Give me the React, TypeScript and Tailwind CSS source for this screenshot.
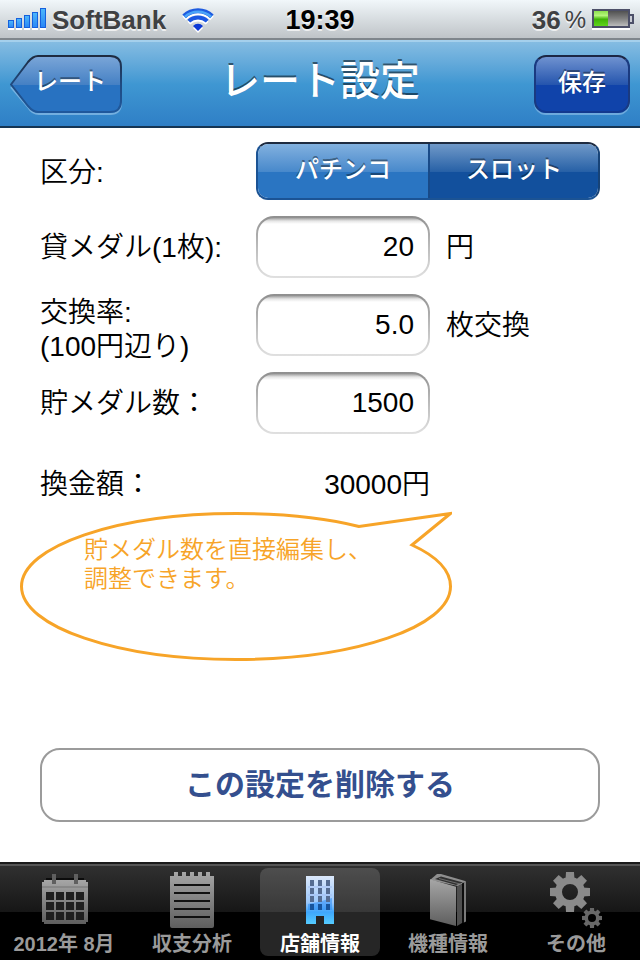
import { useState, type ReactNode } from "react";
import clsx from "clsx";

const FONT = "font-['Liberation_Sans','Noto_Sans_CJK_JP',sans-serif]";

function StatusBar() {
  return (
    <div className="grid h-10 grid-cols-[1fr_auto_1fr] items-center border-b-2 border-[#7f868c] bg-linear-to-b from-[#f1f7fa] to-[#bfc4c8] px-2 [text-shadow:0_2px_0_#ffffffb0]">
      <div className="flex items-center">
        <svg width="38" height="22" viewBox="0 0 38 22">
          <defs>
            <linearGradient id="signal" x1="0" y1="0" x2="0" y2="1">
              <stop offset="0" stopColor="#4db8fb" />
              <stop offset="1" stopColor="#2a86f5" />
            </linearGradient>
          </defs>
          <path d="M0 21h6M8 21h6M16 21h6M24 21h6M32 21h6" stroke="#fff" strokeWidth="2" />
          {[7, 9, 12, 15, 19].map((h, i) => (
            <rect
              key={h}
              x={i * 8 + 0.5}
              y={19.5 - h}
              width="5"
              height={h}
              fill="url(#signal)"
              stroke="#1660dd"
            />
          ))}
        </svg>
        <span className="ml-1.5 pt-0.5 text-[26px] leading-8 font-bold text-[#404143]">SoftBank</span>
        <svg className="ml-4" width="34" height="28" viewBox="0 0 34 28">
          <g fill="none" stroke="#fff" strokeWidth="5" transform="translate(0 2)">
            <path d="M2.100 11.400A20 20 0 0 1 29.900 11.400" />
            <path d="M6.800 16.100A13.500 13.500 0 0 1 25.200 16.100" strokeWidth="4" />
            <path d="M16 26L11 20.900A7 7 0 0 1 21 20.900Z" fill="#fff" stroke="none" />
          </g>
          <path d="M2.100 11.400A20 20 0 0 1 29.900 11.400" fill="none" stroke="#1d5be0" strokeWidth="5" />
          <path d="M2.800 12A19.400 19.400 0 0 1 29.200 12" fill="none" stroke="#4aa4f8" strokeWidth="2.500" />
          <path d="M6.800 16.100A13.500 13.500 0 0 1 25.200 16.100" fill="none" stroke="#1b57e2" strokeWidth="4" />
          <path d="M16 26L11 20.900A7 7 0 0 1 21 20.900Z" fill="#0c39d6" />
        </svg>
      </div>
      <span className="pt-0.5 text-[27px] leading-8 font-bold text-black">19:39</span>
      <div className="flex items-center justify-end text-[#404143]">
        <span className="pt-0.5 text-[26px] leading-8 font-bold">36</span>
        <span className="ml-1 pt-0.5 text-2xl leading-8">%</span>
        <svg className="ml-1.5 -mr-0.5" width="42" height="22" viewBox="0 0 42 22">
          <defs>
            <linearGradient id="charge" x1="0" y1="0" x2="0" y2="1">
              <stop offset="0" stopColor="#8be04d" />
              <stop offset=".3" stopColor="#b4f67a" />
              <stop offset=".55" stopColor="#3fb405" />
              <stop offset="1" stopColor="#5fd41c" />
            </linearGradient>
            <linearGradient id="empty" x1="0" y1="0" x2="0" y2="1">
              <stop offset="0" stopColor="#4b4b4b" />
              <stop offset=".5" stopColor="#808080" />
              <stop offset="1" stopColor="#c4c4c4" />
            </linearGradient>
          </defs>
          <path d="M0 21h38" stroke="#fff" strokeWidth="2" />
          <rect x="1" y="2" width="36" height="17" fill="url(#empty)" stroke="#4c4f68" strokeWidth="2" />
          <rect x="2" y="3" width="14" height="15" fill="url(#charge)" />
          <path d="M38 7h3v8h-3" fill="#c9ccd4" stroke="#4c4f68" strokeWidth="2" />
        </svg>
      </div>
    </div>
  );
}

function BackButton({ children }: { children: ReactNode }) {
  return (
    <button
      type="button"
      className="relative h-[58px] w-28 pb-1 pl-2 text-2xl font-medium text-white [text-shadow:0_-2px_0_#00000066]"
    >
      <svg className="absolute inset-0" width="112" height="60" viewBox="0 0 112 60">
        <defs>
          <linearGradient id="back" x1="0" y1="0" x2="0" y2="1">
            <stop offset="0" stopColor="#7ba6d8" />
            <stop offset=".52" stopColor="#4480c4" />
            <stop offset=".52" stopColor="#2872c1" />
            <stop offset="1" stopColor="#2872c1" />
          </linearGradient>
          <linearGradient id="backEdge" x1="0" y1="0" x2="0" y2="1">
            <stop offset="0" stopColor="#1e2b40" />
            <stop offset=".5" stopColor="#1f4a80" />
            <stop offset="1" stopColor="#1f589c" />
          </linearGradient>
        </defs>
        <path
          d="M1 32L18 52Q22 59 29 59H100Q111 59 111 48"
          fill="none"
          stroke="#8fc0e8"
          strokeWidth="2"
          opacity=".7"
        />
        <path
          d="M1 29.500L18 7Q23 1 28 1H100Q111 1 111 12V46Q111 57 100 57H28Q23 57 18 51Z"
          fill="url(#back)"
          stroke="url(#backEdge)"
          strokeWidth="2"
        />
      </svg>
      <span className="relative">{children}</span>
    </button>
  );
}

function NavBar() {
  return (
    <header className="grid h-22 grid-cols-[1fr_auto_1fr] items-center border-t-2 border-b-2 border-t-[#a5d0ec] border-b-[#153553] bg-linear-to-b from-[#84bce2] via-[#3f97d2] to-[#2f7fc6] px-2.5">
      <BackButton>レート</BackButton>
      <h1 className="pb-1.5 text-[40px] leading-12 font-medium text-white [text-shadow:0_-2px_0_#00000080]">
        レート設定
      </h1>
      <button
        type="button"
        className="h-[58px] w-24 justify-self-end rounded-xl border-2 border-t-[#1c2745] border-r-[#1a3a80] border-b-[#12398f] border-l-[#1a3a80] bg-[linear-gradient(#6f92d0,#2454ad_52%,#1043aa_52%,#1043aa)] pb-0.5 text-2xl font-medium text-white shadow-[0_2px_0_#8fc0e8a0] [text-shadow:0_-2px_0_#00000066]"
      >
        保存
      </button>
    </header>
  );
}

function Segments({ value, onChange }: { value: string; onChange: (v: string) => void }) {
  return (
    <div className="grid h-[58px] grid-cols-2 overflow-hidden rounded-xl border-2 border-t-[#1e2b40] border-r-[#174377] border-b-[#1b5394] border-l-[#1b5394]">
      {["パチンコ", "スロット"].map((name, i) => (
        <button
          key={name}
          type="button"
          aria-pressed={value === name}
          onClick={() => onChange(name)}
          className={clsx(
            "pb-0.5 text-2xl font-medium text-white [text-shadow:0_-2px_0_#00000066]",
            i > 0 && "border-l-2 border-[#184a88]",
            value === name
              ? "bg-[linear-gradient(#7099c8,#2660a6_52%,#12509d_52%,#12509d)]"
              : "bg-[linear-gradient(#82b1df,#4788cb_52%,#2a75c2_52%,#2a75c2)]",
          )}
        >
          {name}
        </button>
      ))}
    </div>
  );
}

function Field({
  id,
  label,
  value,
  unit,
  onChange,
}: {
  id: string;
  label: ReactNode;
  value: string;
  unit?: string;
  onChange: (v: string) => void;
}) {
  return (
    <div className="flex h-[62px] items-center">
      <label htmlFor={id} className="w-54 shrink-0 pt-0.5">
        {label}
      </label>
      <input
        id={id}
        inputMode="decimal"
        value={value}
        onChange={(e) => onChange(e.target.value)}
        className="h-[62px] w-[174px] rounded-[18px] border-2 border-transparent pr-3.5 text-right outline-none [background:linear-gradient(#a0a0a0,#e6e6e6_3px,#fff_6px)_padding-box,linear-gradient(#8f8f8f,#b4b4b4_40%,#e0e0e0)_border-box]"
      />
      {unit && <span className="ml-4 pt-0.5">{unit}</span>}
    </div>
  );
}

function Hint({ children }: { children: ReactNode }) {
  return (
    <div className="relative -ml-5 h-[150px] w-[432px] pt-6 pl-16 text-2xl leading-[29px] text-[#f7a428]">
      <svg className="absolute inset-0" width="432" height="150" viewBox="0 0 432 150">
        <path
          d="M339 15.500C306 7 262 2.500 216 2.500C98 2.500 1.500 35 1.500 75.500C1.500 116 98 148.500 216 148.500C334 148.500 430.500 116 430.500 75.500C430.500 59 416 45 392 34L430.500 2.500Z"
          fill="none"
          stroke="#f7a428"
          strokeWidth="3"
        />
      </svg>
      <p className="relative">{children}</p>
    </div>
  );
}

function CalendarIcon() {
  return (
    <>
      <path d="M12 8h38v2H12Z" fill="#0c0c0c" />
      <path d="M10 10h42v2h2v40h-2v2H10v-2H8V12h2Z" fill="url(#grey)" />
      <path d="M8 17h46" stroke="#747474" strokeWidth="1" />
      <path d="M20 4v10M42 4v10" stroke="#5f5f5f" strokeWidth="4" />
      {[22, 32, 42].map((y) =>
        [12, 22, 32, 42].map((x) => (
          <rect key={`${x}-${y}`} x={x} y={y} width="8" height="8" fill="#1f1f1f" />
        )),
      )}
    </>
  );
}

function NotepadIcon() {
  return (
    <>
      <path
        d="M8 6h4V2h4v4h4V2h4v4h4V2h4v4h4V2h4v4h4V2h4v4h4v50q0 2-2 2H10q-2 0-2-2Z"
        fill="url(#grey)"
      />
      <path d="M12 15h36M12 23h36M12 31h36M12 39h36M12 47h36" stroke="#111" strokeWidth="2" />
    </>
  );
}

function BuildingIcon() {
  return (
    <>
      <path d="M16 6h28v48H34v-8h-8v8H16Z" fill="url(#blue)" />
      <path d="M18 34q12-2 24-6v12H18Z" fill="#2a8cf5" opacity=".55" />
      {[10, 18, 26, 34].map((y) =>
        [20, 28, 36].map((x) => (
          <rect
            key={`${x}-${y}`}
            x={x}
            y={y}
            width="4"
            height="6"
            fill={y > 26 ? "#17549c" : "#566d92"}
          />
        )),
      )}
      <path d="M18 17h24M18 25h24" stroke="#a3bdf3" strokeWidth="1" />
    </>
  );
}

function BooksIcon() {
  return (
    <>
      <path d="M12 10L19 4H23L48 11.300L46 13L40 16Z" fill="#8f8f8f" />
      <path d="M17 9L23 6.500L45 12.500L38 15Z" fill="#303030" />
      <path d="M21 8.500L42 14" stroke="#6e6e6e" strokeWidth="1" />
      <path d="M39 16.500L44 14V53L39 56Z" fill="#4f4f4f" />
      <path d="M44 13.500L46 12.500V53L44 53Z" fill="#0d0d0d" />
      <path d="M46 12.500L48 11.300V51.500L46 52.500Z" fill="#7a7a7a" />
      <path d="M12 9.300L38 16.700V56L12 49.300Z" fill="url(#grey)" />
    </>
  );
}

function Gear({ x, y, r, color }: { x: number; y: number; r: number; color: string }) {
  return (
    <g transform={`translate(${x} ${y}) scale(${r / 20})`}>
      <circle r="11.500" fill="none" stroke={color} strokeWidth="7" />
      {[0, 45, 90, 135, 180, 225, 270, 315].map((a) => (
        <path key={a} transform={`rotate(${a})`} d="M-4.500-12L-4-20H4L4.500-12Z" fill={color} />
      ))}
    </g>
  );
}

function GearsIcon() {
  return (
    <>
      <Gear x={24} y={22} r={20} color="#8a8a8a" />
      <Gear x={46} y={48} r={10} color="#686868" />
    </>
  );
}

const tabs = [
  { label: "2012年 8月", icon: <CalendarIcon /> },
  { label: "収支分析", icon: <NotepadIcon /> },
  { label: "店舗情報", icon: <BuildingIcon /> },
  { label: "機種情報", icon: <BooksIcon /> },
  { label: "その他", icon: <GearsIcon /> },
];

function TabBar() {
  const [active, setActive] = useState("店舗情報");
  return (
    <nav className="mt-auto border-t-2 border-[#1b1b1b] bg-[linear-gradient(#555_2px,#303030_2px,#161616_48px,#000_48px)] pt-1 pb-1">
      <svg className="absolute" width="0" height="0">
        <defs>
          <linearGradient id="grey" x1="0" y1="0" x2="0" y2="1">
            <stop offset="0" stopColor="#a6a6a6" />
            <stop offset="1" stopColor="#5e5e5e" />
          </linearGradient>
          <linearGradient id="blue" x1="0" y1="0" x2="0" y2="1">
            <stop offset="0" stopColor="#dbe8fb" />
            <stop offset=".55" stopColor="#9cc8fb" />
            <stop offset=".75" stopColor="#3fa6fb" />
            <stop offset="1" stopColor="#55ccff" />
          </linearGradient>
        </defs>
      </svg>
      <div className="grid grid-cols-5">
        {tabs.map(({ label, icon }) => (
          <button
            key={label}
            type="button"
            onClick={() => setActive(label)}
            className={clsx(
              "mx-1 flex h-22 flex-col items-center rounded-lg pt-0.5 text-xl leading-6 font-bold whitespace-nowrap",
              active === label ? "bg-white/15 text-white" : "text-[#9a9a9a]",
            )}
          >
            <svg className="shrink-0" width="60" height="60" viewBox="0 0 60 60">
              {icon}
            </svg>
            <span className="pt-0.5">{label}</span>
          </button>
        ))}
      </div>
    </nav>
  );
}

export default function App() {
  const [kind, setKind] = useState("スロット");
  const [price, setPrice] = useState("20");
  const [rate, setRate] = useState("5.0");
  const [medals, setMedals] = useState("1500");

  return (
    <div className={clsx("flex min-h-screen flex-col bg-white text-black", FONT)}>
      <StatusBar />
      <NavBar />
      <main className="px-10 pt-3.5 pb-10 text-[28px] leading-[34px] font-[350]">
        <div className="flex flex-col gap-4">
          <div className="flex items-center">
            <span className="w-54 shrink-0 pt-1">区分:</span>
            <div className="flex-1">
              <Segments value={kind} onChange={setKind} />
            </div>
          </div>
          <Field id="price" label="貸メダル(1枚):" value={price} unit="円" onChange={setPrice} />
          <Field
            id="rate"
            label={
              <span className="block pt-2">
                交換率:
                <br />
                (100円辺り)
              </span>
            }
            value={rate}
            unit="枚交換"
            onChange={setRate}
          />
          <Field id="medals" label="貯メダル数：" value={medals} onChange={setMedals} />
        </div>
        <div className="mt-6 flex h-[53px] items-center">
          <span className="w-54 shrink-0">換金額：</span>
          <output className="w-[174px] text-right">30000円</output>
        </div>
        <Hint>
          貯メダル数を直接編集し、
          <br />
          調整できます。
        </Hint>
        <button
          type="button"
          className="mt-[87px] h-[74px] w-full rounded-[20px] border-2 border-[#9b9b9b] bg-white text-3xl font-bold text-[#344f8e]"
        >
          この設定を削除する
        </button>
      </main>
      <TabBar />
    </div>
  );
}
